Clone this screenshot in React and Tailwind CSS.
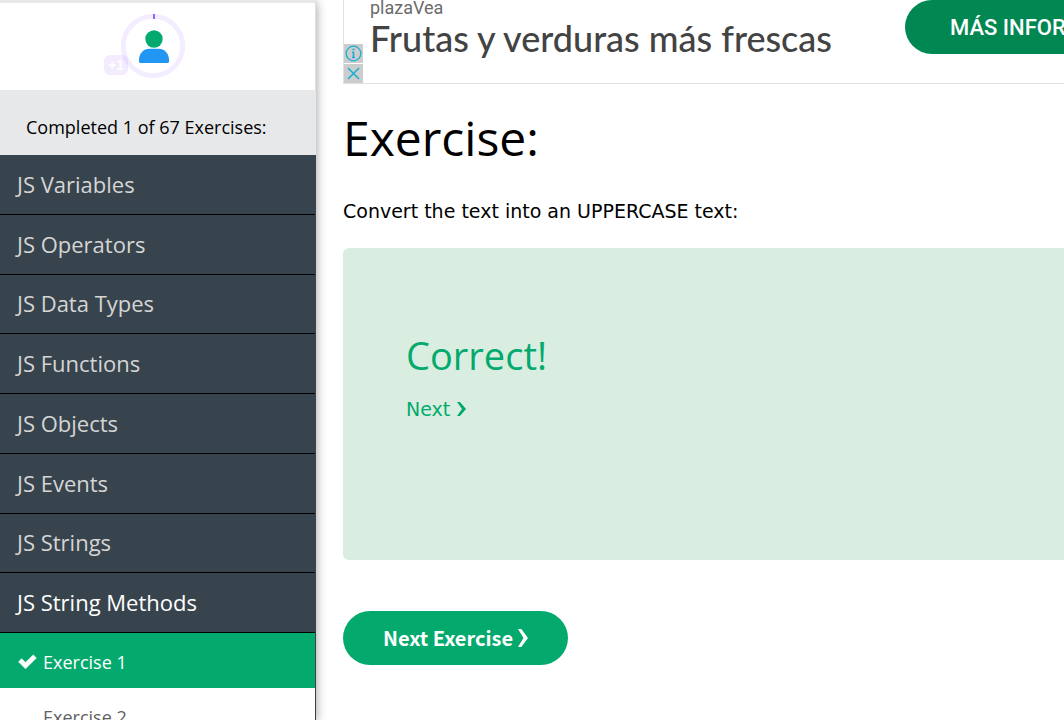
const chapters = [
  "JS Variables",
  "JS Operators",
  "JS Data Types",
  "JS Functions",
  "JS Objects",
  "JS Events",
  "JS Strings",
  "JS String Methods",
];

function ProfileRing() {
  return (
    <div className="relative h-16 w-16">
      <svg viewBox="0 0 64 64" className="h-16 w-16" aria-hidden="true">
        <circle cx="32" cy="32" r="29.7" fill="none" stroke="#f4edff" strokeWidth="4.800" />
        <path d="M33 0v5" stroke="#9763f6" strokeWidth="2" />
        <circle cx="33" cy="25" r="8.700" fill="#04aa6d" />
        <path d="M18 47.500v-1.500c0-6.500 4.500-11.200 10.500-11.200h9c6 0 10.500 4.700 10.500 11.200v1.500q0 1.500-1.500 1.500h-27q-1.500 0-1.500-1.500z" fill="#2196f3" />
      </svg>
      <span className="absolute -left-[17px] top-[41px] flex h-5 w-6 items-center justify-center rounded-md bg-[#9763f6]/12 font-['Liberation_Sans',sans-serif] text-sm font-bold text-white">
        +1
      </span>
    </div>
  );
}

function Chevron({ className }) {
  return (
    <svg viewBox="0 0 10 18" className={className} preserveAspectRatio="none" aria-hidden="true">
      <path d="M0 0h3.300l6.700 9-6.700 9h-3.300l5.500-9z" fill="currentColor" />
    </svg>
  );
}

function Sidebar() {
  return (
    <aside className="relative z-10 w-[316px] shrink-0 bg-white font-['Open_Sans',sans-serif] shadow-[0_2px_10px_rgba(0,0,0,0.4)]">
      <div className="border-r border-t-[3px] border-[#e0e0e2] border-t-[#e7e8ea]">
        <div className="flex h-[87px] justify-center pr-[9px] pt-[11px]">
          <ProfileRing />
        </div>
      </div>
      <p className="flex h-[65px] items-center bg-[#e7e8ea] px-[26px] pt-2 text-lg text-black">
        Completed 1 of 67 Exercises:
      </p>
      <nav className="h-full border-r border-[#38444d]">
        <ul className="grid min-h-[478px] auto-rows-fr">
          {chapters.map((name) => (
            <li key={name} className="flex border-b border-black bg-[#38444d]">
              <a
                href="#chapter"
                className={
                  name === "JS String Methods"
                    ? "flex flex-1 items-center px-[17px] text-[22px] text-white"
                    : "flex flex-1 items-center px-[17px] text-[22px] text-[#d5d5d5]"
                }
              >
                {name}
              </a>
            </li>
          ))}
        </ul>
        <ul className="text-lg">
          <li>
            <a href="#exercise-1" className="flex h-[55px] items-center bg-[#04aa6d] pl-[18px] pt-[2px] text-white">
              <svg viewBox="0 0 19 15" className="mr-[6px] h-[15px] w-[19px]" aria-hidden="true">
                <path d="M0.500 7.800l3.200-3.100 3.800 3.700 7.700-7.500 3.200 3-10.900 10.900z" fill="currentColor" stroke="currentColor" strokeWidth="0.600" strokeLinejoin="round" />
              </svg>
              Exercise 1
            </a>
          </li>
          <li>
            <a href="#exercise-2" className="flex h-[55px] items-center pl-[43px] pt-[2px] text-[#616161]">
              Exercise 2
            </a>
          </li>
        </ul>
      </nav>
    </aside>
  );
}

function AdBanner() {
  return (
    <section aria-label="Advertisement" className="relative flex h-[84px] overflow-hidden border-b border-l border-[#dfe1e5] pl-[26px]">
      <div className="w-[535px] shrink-0 whitespace-nowrap text-[#434343]">
        <p className="font-['Roboto',sans-serif] text-lg leading-4 text-[#6b6b6b]">plazaVea</p>
        <p className="font-['Lato',sans-serif] text-[36px] font-medium leading-[44px]">Frutas y verduras más frescas</p>
      </div>
      <button className="h-[54px] shrink-0 rounded-full bg-[#018752] px-[45px] font-['Roboto',sans-serif] text-[22px] font-medium text-white">
        MÁS INFORMACIÓN
      </button>
      <div className="absolute bottom-0 left-0 flex flex-col gap-px text-[#14b1d4]">
        <button aria-label="Ad information" className="h-[19px] w-[19px] bg-[#cccccc]">
          <svg viewBox="0 0 19 19" className="h-[19px] w-[19px]" fill="none" stroke="currentColor">
            <circle cx="9.500" cy="9.500" r="7.300" strokeWidth="1.300" />
            <path d="M9.500 8v5.500M8 8.300h1.500M8 13.500h3" strokeWidth="1.600" />
            <circle cx="9.500" cy="5.500" r="1.100" fill="currentColor" stroke="none" />
          </svg>
        </button>
        <button aria-label="Close ad" className="h-[19px] w-[19px] bg-[#cccccc]">
          <svg viewBox="0 0 19 19" className="h-[19px] w-[19px]" fill="none" stroke="currentColor">
            <path d="M4 4l11 11M15 4l-11 11" strokeWidth="1.500" />
          </svg>
        </button>
      </div>
    </section>
  );
}

export default function App() {
  return (
    <div className="flex h-screen overflow-hidden bg-white">
      <Sidebar />
      <main className="min-w-0 flex-1 pl-[27px] font-['DejaVu_Sans',sans-serif] text-black">
        <AdBanner />
        <h1 className="mt-[18px] font-['Open_Sans',sans-serif] text-[48px] leading-[72px]">Exercise:</h1>
        <p className="mt-[23px] text-[19px] leading-7">Convert the text into an UPPERCASE text:</p>
        <section className="mt-[23px] min-h-[312px] rounded-l-md bg-[#d9eee1] px-[63px] pt-[77px] text-[#04aa6d]">
          <h2 className="font-['Open_Sans',sans-serif] text-[38px] leading-[60px]">Correct!</h2>
          <a href="#next" className="mt-[10px] flex items-center gap-[7px] text-[19px] leading-7">
            Next
            <Chevron className="h-[14px] w-[9px]" />
          </a>
        </section>
        <button className="mt-[51px] flex h-[54px] w-[225px] items-center justify-center gap-[5px] rounded-full bg-[#04aa6d] font-['Noto_Sans_CJK_JP',sans-serif] text-xl font-bold text-white">
          Next Exercise
          <Chevron className="h-[18px] w-[10px]" />
        </button>
      </main>
    </div>
  );
}
